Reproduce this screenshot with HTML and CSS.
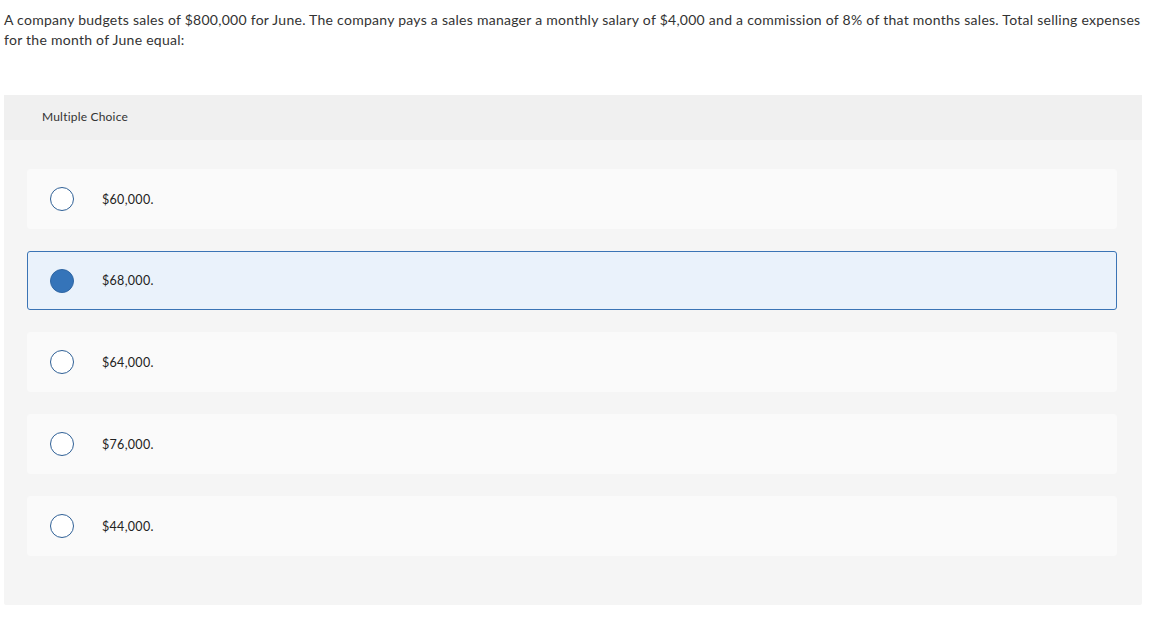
FILE: index.html
```html
<!DOCTYPE html>
<html>
<head>
<meta charset="utf-8">
<link rel="stylesheet" href="styles.css">
</head>
<body>
<div class="question">A company budgets sales of $800,000 for June. The company pays a sales manager a monthly salary of $4,000 and a commission of 8% of that months sales. Total selling expenses for the month of June equal:</div>
<div class="panel">
  <div class="panel-header">Multiple Choice</div>
  <div class="options">
    <div class="option"><span class="radio"></span><span class="label">$60,000.</span></div>
    <div class="option selected"><span class="radio"></span><span class="label">$68,000.</span></div>
    <div class="option"><span class="radio"></span><span class="label">$64,000.</span></div>
    <div class="option"><span class="radio"></span><span class="label">$76,000.</span></div>
    <div class="option"><span class="radio"></span><span class="label">$44,000.</span></div>
  </div>
</div>
</body>
</html>
```
FILE: styles.css
```css
html, body {
  margin: 0;
  padding: 0;
  background: #fff;
}
body {
  font-family: "Lato", "Liberation Sans", sans-serif;
  color: #333;
  width: 1146px;
  padding: 10px 0 0 4px;
}
.question {
  font-size: 14px;
  line-height: 20px;
  letter-spacing: 0.265px;
  color: #333;
}
.panel {
  margin-top: 45px;
  width: 1138px;
  background: #f5f5f5;
  border-radius: 2px;
}
.panel-header {
  background: #f0f0f0;
  height: 45px;
  box-sizing: border-box;
  padding: 14px 0 0 38px;
  font-size: 12px;
  line-height: 16px;
  letter-spacing: 0.2px;
  color: #333;
}
.options {
  display: flex;
  flex-direction: column;
  gap: 22px;
  padding: 29px 25px 49px 23px;
}
.option {
  display: flex;
  align-items: center;
  height: 60px;
  box-sizing: border-box;
  background: #fafafa;
  border: 1px solid #fafafa;
  border-radius: 3px;
  padding-left: 22px;
}
.option.selected {
  background: #eaf2fb;
  border-color: #3b74b5;
  height: 59px;
}
.radio {
  width: 22px;
  height: 22px;
  border: 1.5px solid #2f6096;
  border-radius: 50%;
  background: #fff;
  flex: none;
}
.selected .radio {
  background: #3574b9;
  border-color: #2f66a3;
}
.label {
  margin-left: 28px;
  font-size: 12.5px;
  letter-spacing: 0.3px;
  color: #222;
}
```
